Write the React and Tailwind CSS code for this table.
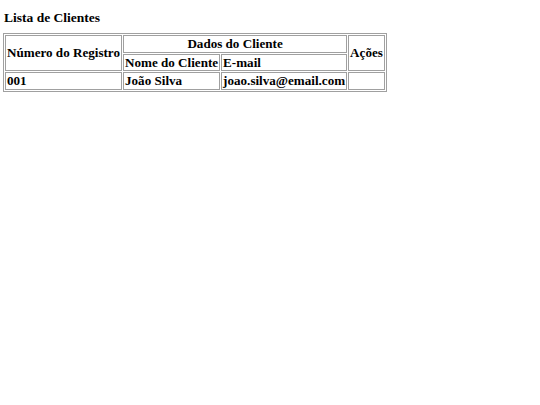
import React from 'react';

const cell = "border border-[#a0a0a0] px-[1px] py-0 font-bold leading-[15.5px]";

const App = () => {
  return (
    <div className="min-h-[405px] w-full bg-white px-[3px] pt-[10px] text-black font-['Liberation_Serif','Times_New_Roman',serif] text-[13.1px]">
      {/* Title */}
      <h3 className="ml-[1px] font-bold text-[13.5px] leading-[15px] mb-[8px]">Lista de Clientes</h3>

      {/* Clients table */}
      <table className="border border-[#a0a0a0] border-separate border-spacing-[1px] text-left">
        <thead>
          <tr>
            <th rowSpan={2} className={cell}>Número do Registro</th>
            <th colSpan={2} className={`${cell} text-center`}>Dados do Cliente</th>
            <th rowSpan={2} className={cell}>Ações</th>
          </tr>
          <tr>
            <th className={cell}>Nome do Cliente</th>
            <th className={cell}>E-mail</th>
          </tr>
        </thead>
        <tbody>
          <tr>
            <td className={cell}>001</td>
            <td className={cell}>João Silva</td>
            <td className={cell}>joao.silva@email.com</td>
            <td className={cell}></td>
          </tr>
        </tbody>
      </table>
    </div>
  );
};

export default App;
